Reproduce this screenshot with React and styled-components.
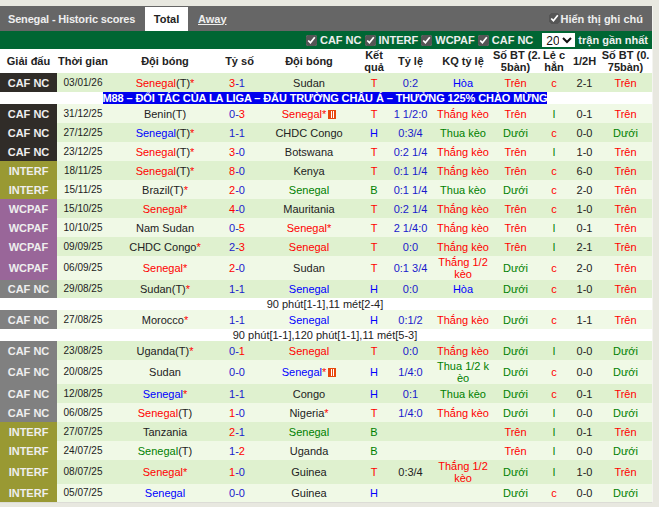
import React from "react";
import styled, { createGlobalStyle } from "styled-components";

const Global = createGlobalStyle`
  html, body { margin: 0; padding: 0; background: #e8e8e0; }
  body { font-family: "Liberation Sans", Arial, sans-serif; font-size: 11px; line-height: 12px; color: #222; }
`;

const Page = styled.div`
  width: 652px;
  margin-top: 6px;
  background: #fff;
  border-bottom: 1px solid #dcdcd6;
  border-right: 1px solid #f4f4f0;
`;

const TitleBar = styled.div`
  display: flex;
  align-items: flex-end;
  height: 25px;
  padding-left: 8px;
  background: #666;
  color: #eee;
  font-weight: bold;
`;

const Title = styled.div`
  width: 137px;
  align-self: center;
  flex: none;
  letter-spacing: -0.17px;
`;

const Tab = styled.div`
  width: 43px;
  height: 24px;
  flex: none;
  display: flex;
  align-items: center;
  justify-content: center;
  background: #fff;
  color: #222;
`;

const TabLink = styled.a`
  margin-left: 10px;
  align-self: center;
  color: #eee;
  text-decoration: underline;
`;

const NoteToggle = styled.label`
  margin-left: auto;
  margin-right: 9px;
  align-self: center;
  display: flex;
  align-items: center;
  gap: 1px;
`;

const Check = styled.input.attrs({ type: "checkbox", defaultChecked: true })`
  width: 11px;
  height: 11px;
  margin: 0;
  accent-color: #555;
  flex: none;
`;

const FilterBar = styled.div`
  display: flex;
  align-items: center;
  justify-content: flex-end;
  height: 18px;
  padding-right: 4px;
  background: #006633;
  color: #eee;
  font-weight: bold;
`;

const Filter = styled.label`
  display: flex;
  align-items: center;
  gap: 3px;
  margin-right: 3px;
`;

const Count = styled.select`
  width: 33px;
  height: 14px;
  margin: 0 3px 0 6px;
  padding: 0;
  border: 0;
  background: #fff;
  color: #111;
  font-family: inherit;
  font-size: 12px;
`;

const Table = styled.table`
  width: 652px;
  table-layout: fixed;
  border-collapse: collapse;
  border-spacing: 0;
`;

const Head = styled.th`
  height: 24px;
  padding: 0;
  background: #fff;
  color: #222;
  font-weight: bold;
  text-align: center;
  white-space: pre;
`;

const Row = styled.tr`
  height: ${(p) => p.$h}px;
  background: ${(p) => (p.$odd ? "#dff1cf" : "#f0f9e6")};
`;

const Cell = styled.td`
  padding: 0 ${(p) => p.$pr || 0}px 0 0;
  text-align: center;
  white-space: pre;
  color: ${(p) => p.$c || "#222"};
`;

const League = styled.td`
  padding: 0;
  text-align: center;
  background: ${(p) => p.$bg};
  color: #eee;
  font-weight: bold;
`;

const DateCell = styled.td`
  padding: 0;
  text-align: center;
  font-size: 10px;
  color: #222;
`;

const WideRow = styled.tr`
  height: 12px;
  background: #fff;
`;

const WideCell = styled.td`
  padding: 0 2px 0 0;
  text-align: center;
  color: #222;
`;

const Promo = styled.span`
  background: #0000ee;
  color: #fff;
  font-weight: bold;
  letter-spacing: -0.11px;
`;

const Colored = styled.span`
  color: ${(p) => p.$c};
`;

const CardIcon = styled.svg`
  width: 8px;
  height: 9px;
  margin-left: 2px;
  vertical-align: -1px;
`;

const COLORS = { r: "#ff0000", b: "#0000ff", g: "#008000", d: "#222", n: "#1a1acc" };
const LEAGUES = {
  dark: ["CAF NC", "#302c28"],
  gray: ["CAF NC", "#808080"],
  inter: ["INTERF", "#999933"],
  wc: ["WCPAF", "#996699"],
};

const Card = () => (
  <CardIcon viewBox="0 0 8 9">
    <rect width="8" height="9" fill="#e8480c" />
    <rect x="3" y="1" width="1" height="7" fill="#fff" />
    <rect x="5" y="1" width="1" height="7" fill="#fff" />
  </CardIcon>
);

const Team = ({ t }) => {
  const [name, color, suffix = "", star, card] = t;
  return (
    <Cell $c="#222">
      <Colored $c={COLORS[color]}>{name}</Colored>
      {suffix}
      {star && <Colored $c="#f00">*</Colored>}
      {card && <Card />}
    </Cell>
  );
};

const Score = ({ s }) => {
  const [a, b] = s.split("-");
  return (
    <Cell $c={COLORS.n} $pr={5}>
      {+a > +b ? <Colored $c="#f00">{a}</Colored> : a}-
      {+b > +a ? <Colored $c="#f00">{b}</Colored> : b}
    </Cell>
  );
};

const RES = { T: "r", H: "b", B: "g" };
const WIN = "Thắng kèo";
const LOSE = "Thua kèo";
const OU = (v) => (v === "Trên" ? COLORS.r : COLORS.g);
const kqColor = (k) => (k.startsWith("Thắng") ? COLORS.r : k.startsWith("Thua") ? COLORS.g : COLORS.b);

const S = "Senegal";
const rows = [
  ["dark", "03/01/26", [S, "r", "(T)", 1], "3-1", ["Sudan", "d"], "T", "0:2", "Hòa", "Trên", "c", "2-1", "Trên", 19],
  { promo: "M88 – ĐỐI TÁC CỦA LA LIGA – ĐẤU TRƯỜNG CHÂU Á – THƯỞNG 125% CHÀO MỪNG" },
  ["dark", "31/12/25", ["Benin(T)", "d"], "0-3", [S, "r", "", 1, 1], "T", "1 1/2:0", WIN, "Trên", "l", "0-1", "Trên", 19],
  ["dark", "27/12/25", [S, "b", "(T)", 1], "1-1", ["CHDC Congo", "d"], "H", "0:3/4", LOSE, "Dưới", "c", "0-0", "Dưới", 19],
  ["dark", "23/12/25", [S, "r", "(T)", 1], "3-0", ["Botswana", "d"], "T", "0:2 1/4", WIN, "Trên", "l", "1-0", "Trên", 19],
  ["inter", "18/11/25", [S, "r", "(T)", 1], "8-0", ["Kenya", "d"], "T", "0:1 1/4", WIN, "Trên", "c", "6-0", "Trên", 19],
  ["inter", "15/11/25", ["Brazil(T)", "d", "", 1], "2-0", [S, "g"], "B", "0:1 1/4", LOSE, "Dưới", "c", "2-0", "Trên", 19],
  ["wc", "15/10/25", [S, "r", "", 1], "4-0", ["Mauritania", "d"], "T", "0:2 1/4", WIN, "Trên", "c", "1-0", "Trên", 19],
  ["wc", "10/10/25", ["Nam Sudan", "d"], "0-5", [S, "r", "", 1], "T", "2 1/4:0", WIN, "Trên", "l", "0-1", "Trên", 19],
  ["wc", "09/09/25", ["CHDC Congo", "d", "", 1], "2-3", [S, "r"], "T", "0:0", WIN, "Trên", "l", "2-1", "Trên", 19],
  ["wc", "06/09/25", [S, "r", "", 1], "2-0", ["Sudan", "d"], "T", "0:1 3/4", "Thắng 1/2\nkèo", "Dưới", "c", "2-0", "Trên", 24],
  ["gray", "29/08/25", ["Sudan(T)", "d", "", 1], "1-1", [S, "b"], "H", "0:0", "Hòa", "Dưới", "c", "1-0", "Trên", 18],
  { note: "90 phút[1-1],11 mét[2-4]" },
  ["gray", "27/08/25", ["Morocco", "d", "", 1], "1-1", [S, "b"], "H", "0:1/2", WIN, "Dưới", "c", "1-1", "Trên", 19],
  { note: "90 phút[1-1],120 phút[1-1],11 mét[5-3]" },
  ["gray", "23/08/25", ["Uganda(T)", "d", "", 1], "0-1", [S, "r"], "T", "0:0", WIN, "Dưới", "l", "0-0", "Dưới", 19],
  ["gray", "20/08/25", ["Sudan", "d"], "0-0", [S, "b", "", 1, 1], "H", "1/4:0", "Thua 1/2 k\nèo", "Dưới", "c", "0-0", "Dưới", 24],
  ["gray", "12/08/25", [S, "b", "", 1], "1-1", ["Congo", "d"], "H", "0:1", LOSE, "Dưới", "c", "0-1", "Trên", 19],
  ["gray", "06/08/25", [S, "r", "(T)"], "1-0", ["Nigeria", "d", "", 1], "T", "1/4:0", WIN, "Dưới", "l", "0-0", "Dưới", 19],
  ["inter", "27/07/25", ["Tanzania", "d"], "2-1", [S, "g"], "B", "", "", "Trên", "l", "0-1", "Trên", 19],
  ["inter", "24/07/25", [S, "g", "(T)"], "1-2", ["Uganda", "d"], "B", "", "", "Trên", "l", "0-0", "Dưới", 19],
  ["inter", "08/07/25", [S, "r", "", 1], "1-0", ["Guinea", "d"], "T", "0:3/4", "Thắng 1/2\nkèo", "Dưới", "l", "1-0", "Trên", 24, true],
  ["inter", "05/07/25", [S, "b"], "0-0", ["Guinea", "d"], "H", "", "", "Dưới", "c", "0-0", "Dưới", 18],
];

const widths = [57, 52, 112, 37, 102, 28, 45, 60, 45, 32, 29, 53];
const headers = ["Giải đấu", "Thời gian", "Đội bóng", "Tỷ số", "Đội bóng", "Kết\nquả", "Tỷ lệ", "KQ tỷ lệ", "Số BT (2.\n5bàn)", "Lẻ c\nhẳn", "1/2H", "Số BT (0.\n75bàn)"];

export default function App() {
  let stripe = 0;
  return (
    <>
      <Global />
      <Page>
        <TitleBar>
          <Title>Senegal - Historic scores</Title>
          <Tab>Total</Tab>
          <TabLink>Away</TabLink>
          <NoteToggle>
            <Check />
            Hiển thị ghi chú
          </NoteToggle>
        </TitleBar>
        <FilterBar>
          {["CAF NC", "INTERF", "WCPAF", "CAF NC"].map((f, i) => (
            <Filter key={i}>
              <Check />
              {f}
            </Filter>
          ))}
          <Count defaultValue="20">
            <option>10</option>
            <option>20</option>
          </Count>
          trận gần nhất
        </FilterBar>
        <Table>
          <colgroup>
            {widths.map((w, i) => (
              <col key={i} width={w} />
            ))}
          </colgroup>
          <thead>
            <tr>
              {headers.map((h, i) => (
                <Head key={i}>{h}</Head>
              ))}
            </tr>
          </thead>
          <tbody>
            {rows.map((r, i) => {
              if (r.promo)
                return (
                  <WideRow key={i}>
                    <WideCell colSpan={12}>
                      <Promo>{r.promo}</Promo>
                    </WideCell>
                  </WideRow>
                );
              if (r.note)
                return (
                  <WideRow key={i}>
                    <WideCell colSpan={12}>{r.note}</WideCell>
                  </WideRow>
                );
              const [lg, date, home, score, away, res, odds, kq, ou, lc, half, ou2, h, blackOdds] = r;
              const odd = stripe++ % 2 === 0;
              const [label, bg] = LEAGUES[lg];
              return (
                <Row key={i} $h={h} $odd={odd}>
                  <League $bg={bg}>{label}</League>
                  <DateCell>{date}</DateCell>
                  <Team t={home} />
                  <Score s={score} />
                  <Team t={away} />
                  <Cell $c={COLORS[RES[res]]}>{res}</Cell>
                  <Cell $c={blackOdds ? "#222" : COLORS.n}>{odds}</Cell>
                  <Cell $c={kqColor(kq)}>{kq}</Cell>
                  <Cell $c={OU(ou)}>{ou}</Cell>
                  <Cell $c={lc === "c" ? COLORS.r : COLORS.g}>{lc}</Cell>
                  <Cell>{half}</Cell>
                  <Cell $c={OU(ou2)}>{ou2}</Cell>
                </Row>
              );
            })}
          </tbody>
        </Table>
      </Page>
    </>
  );
}
